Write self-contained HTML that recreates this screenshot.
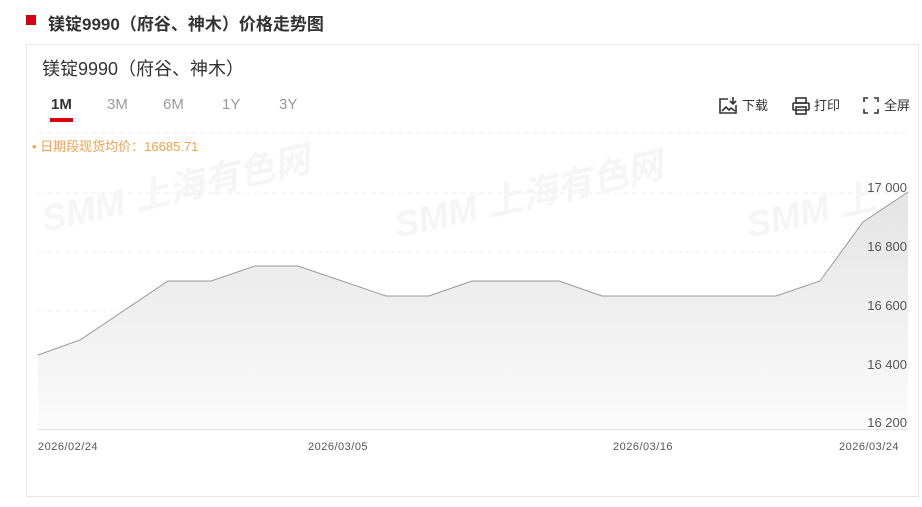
<!DOCTYPE html>
<html><head><meta charset="utf-8"><style>
body{margin:0;width:922px;height:507px;background:#fff;font-family:"Liberation Sans","Noto Sans CJK SC",sans-serif;position:relative;overflow:hidden}
.a{position:absolute;white-space:nowrap}
</style></head><body>
<div class="a" style="left:26px;top:15px;width:10px;height:10px;background:#d7000f"></div>
<div class="a" style="left:48px;top:10px;font-size:17px;font-weight:bold;color:#333">镁锭9990（府谷、神木）价格走势图</div>
<div class="a" style="left:26px;top:44px;width:891px;height:451px;border:1px solid #e6e6e6"></div>
<div class="a" style="left:42px;top:55px;font-size:18px;color:#333">镁锭9990（府谷、神木）</div>
<div class="a" style="left:51px;top:96px;font-size:15px;font-weight:bold;color:#333">1M</div>
<div class="a" style="left:50px;top:118px;width:23px;height:4px;background:#d7000f"></div>
<div class="a" style="left:107px;top:96px;font-size:15px;color:#999">3M</div>
<div class="a" style="left:163px;top:96px;font-size:15px;color:#999">6M</div>
<div class="a" style="left:222px;top:96px;font-size:15px;color:#999">1Y</div>
<div class="a" style="left:279px;top:96px;font-size:15px;color:#999">3Y</div>
<svg class="a" style="left:718px;top:95px" width="200" height="22" viewBox="0 0 200 22">
<g fill="none" stroke="#333" stroke-width="1.6">
<path d="M10 4H2v14h16v-8"/><path d="M4 16l4-4 3 3 2-2 4 3"/><path d="M15 2v7M12 6l3 3 3-3"/>
<rect x="78" y="3" width="10" height="5"/><rect x="75" y="8" width="16" height="7" rx="1"/><rect x="78" y="12" width="10" height="7"/>
<path d="M146 7V3h4M156 3h4v4M160 14v4h-4M150 18h-4v-4"/>
</g>
<text x="24" y="15" font-size="13" fill="#333">下载</text>
<text x="96" y="15" font-size="13" fill="#333">打印</text>
<text x="166" y="15" font-size="13" fill="#333">全屏</text>
</svg>
<svg class="a" style="left:0;top:0" width="922" height="507">
<defs><linearGradient id="g" x1="0" y1="0" x2="0" y2="1"><stop offset="0" stop-color="#e4e4e4"/><stop offset="1" stop-color="#fbfbfb"/></linearGradient></defs>
<g stroke="#ececec" stroke-dasharray="5,4"><path d="M38 133H908M38 193H908M38 252H908M38 311H908M38 370H908"/></g>
<g font-size="36" font-weight="bold" fill="#f5f5f5" font-style="italic">
<text transform="translate(45,232) rotate(-13)">SMM 上海有色网</text>
<text transform="translate(398,238) rotate(-13)">SMM 上海有色网</text>
<text transform="translate(750,238) rotate(-13)">SMM 上</text></g>
<path d="M38 355L80 340L168 281L211 281L255 266L298 266L386 296L429 296L472 281L559 281L602 296L776 296L820 281L863 222L908 192V429H38Z" fill="url(#g)"/>
<path d="M38 355L80 340L168 281L211 281L255 266L298 266L386 296L429 296L472 281L559 281L602 296L776 296L820 281L863 222L908 192" fill="none" stroke="#999" stroke-width="1"/>
<path d="M38 429.5H908" stroke="#e3e3e3"/>
<g font-size="13" fill="#555" text-anchor="end"><text x="907" y="192">17 000</text><text x="907" y="251">16 800</text><text x="907" y="310">16 600</text><text x="907" y="369">16 400</text><text x="907" y="427">16 200</text></g>
<g font-size="11" fill="#555" letter-spacing=".5"><text x="38" y="450">2026/02/24</text><text x="308" y="450">2026/03/05</text><text x="613" y="450">2026/03/16</text><text x="839" y="450">2026/03/24</text></g>
</svg>
<div class="a" style="left:32px;top:136px;font-size:13px;color:#f5a04a">• 日期段现货均价：16685.71</div>
</body></html>
